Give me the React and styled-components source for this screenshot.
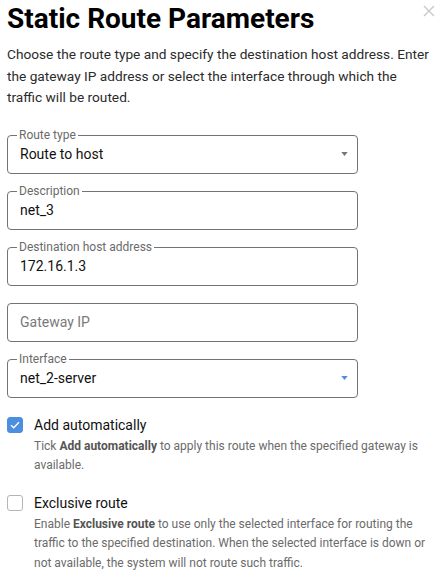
import React from 'react'
import styled, { createGlobalStyle } from 'styled-components'

const GlobalStyle = createGlobalStyle`
  html, body {
    margin: 0;
    padding: 0;
    background: #fff;
  }
  body {
    font-family: Roboto, "Liberation Sans", Arial, sans-serif;
    color: #212121;
  }
`

export default function App() {
  return (
    <>
      <GlobalStyle />
      <Dialog>
        <Header>
          <Title>Static Route Parameters</Title>
          <CloseButton aria-label="Close">
            <svg width="12" height="12" viewBox="0 0 12 12">
              <path d="M1 1 L11 11 M11 1 L1 11" stroke="#c8c8c8" strokeWidth="1.4" fill="none" />
            </svg>
          </CloseButton>
        </Header>
        <Intro>
          Choose the route type and specify the destination host address. Enter the gateway IP
          address or select the interface through which the<br />traffic will be routed.
        </Intro>

        <Fields>
          <Field label="Route type" value="Route to host" select />
          <Field label="Description" value="net_3" />
          <Field label="Destination host address" value="172.16.1.3" />
          <Field placeholder="Gateway IP" />
          <Field label="Interface" value="net_2-server" select accent />
        </Fields>

        <Options>
          <Option
            checked
            title="Add automatically"
            hint={<>Tick <b>Add automatically</b> to apply this route when the specified gateway is available.</>}
          />
          <Option
            title="Exclusive route"
            hint={<>Enable <b>Exclusive route</b> to use only the selected interface for routing the traffic to the specified destination. When the selected interface is down or not available, the system will not route such traffic.</>}
          />
        </Options>
      </Dialog>
    </>
  )
}

function Field({ label, value, placeholder, select, accent }) {
  return (
    <Box>
      {label && <Legend>{label}</Legend>}
      {value ? <Value>{value}</Value> : <Placeholder>{placeholder}</Placeholder>}
      {select && (
        <Arrow width="7" height="4" viewBox="0 0 8 5">
          <path d="M0 0 H8 L4 5 Z" fill={accent ? '#4a90e2' : '#757575'} />
        </Arrow>
      )}
    </Box>
  )
}

function Option({ checked, title, hint }) {
  return (
    <OptionRow>
      <Check checked={checked}>
        {checked && (
          <svg width="10" height="8" viewBox="0 0 10 8">
            <path d="M1 4.2 L3.7 6.8 L9 1.2" stroke="#fff" strokeWidth="1.4" fill="none" />
          </svg>
        )}
      </Check>
      <OptionText>
        <OptionTitle>{title}</OptionTitle>
        <Hint>{hint}</Hint>
      </OptionText>
    </OptionRow>
  )
}

const Dialog = styled.div`
  width: 444px;
  box-sizing: border-box;
  padding: 4px 4px 0 7px;
`

const Header = styled.div`
  display: flex;
  justify-content: space-between;
  align-items: flex-start;
  padding-right: 5px;
`

const Title = styled.h1`
  margin: 0;
  font-size: 28px;
  line-height: 30px;
  font-weight: 700;
  color: #000;
`

const CloseButton = styled.button`
  border: none;
  background: none;
  padding: 0;
  margin-top: 1px;
  display: flex;
  cursor: pointer;
`

const Intro = styled.p`
  margin: 10px 0 0;
  max-width: 431px;
  font-size: 13.7px;
  line-height: 21.5px;
  color: #2b2b2b;
`

const Fields = styled.div`
  display: flex;
  flex-direction: column;
  gap: 17px;
  margin-top: 26px;
  width: 351px;
`

const Box = styled.div`
  position: relative;
  height: 39px;
  box-sizing: border-box;
  border: 1px solid #737373;
  border-radius: 4px;
  display: flex;
  align-items: center;
  padding: 0 12px;
`

const Legend = styled.span`
  position: absolute;
  top: -8px;
  left: 9px;
  padding: 0 2px;
  background: #fff;
  font-size: 12px;
  line-height: 14px;
  color: #6b6b6b;
`

const Value = styled.span`
  flex: 1;
  font-size: 14px;
  color: #111;
`

const Placeholder = styled.span`
  flex: 1;
  font-size: 14px;
  color: #7a7a7a;
`

const Arrow = styled.svg`
  margin-right: -3px;
`

const Options = styled.div`
  display: flex;
  flex-direction: column;
  gap: 19px;
  margin-top: 19px;
`

const OptionRow = styled.div`
  display: flex;
  gap: 11px;
  align-items: flex-start;
`

const Check = styled.span`
  width: 16px;
  height: 16px;
  box-sizing: border-box;
  flex: none;
  border-radius: 3px;
  display: flex;
  align-items: center;
  justify-content: center;
  background: ${p => (p.checked ? '#4a8fe0' : '#fff')};
  border: 1px solid ${p => (p.checked ? '#4a8fe0' : '#b5b5b5')};
`

const OptionText = styled.div`
  display: flex;
  flex-direction: column;
  gap: 3px;
`

const OptionTitle = styled.span`
  font-size: 14px;
  line-height: 17px;
  color: #111;
`

const Hint = styled.p`
  margin: 0;
  font-size: 12px;
  line-height: 19.5px;
  color: #6b6b6b;

  b {
    font-weight: 700;
    color: #555;
  }
`
